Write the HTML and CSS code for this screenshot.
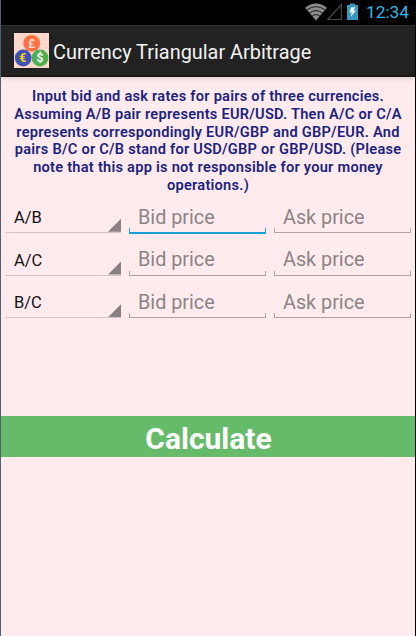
FILE: index.html
```
<!DOCTYPE html>
<html lang="en">
<head>
  <meta charset="UTF-8">
  <meta name="viewport" content="width=device-width, initial-scale=1.0">
  <title>Currency Triangular Arbitrage</title>
  <link rel="stylesheet" href="styles.css">
</head>
<body>
  <div class="screen">
    <div class="status-bar">
      <svg class="wifi" width="22" height="18" viewBox="0 0 22 18">
        <path d="M0 4.8Q11 -3.8 22 4.8L11 17.5Z" fill="#8b8b8b"/>
        <path d="M1.5 7.2Q11 0 20.5 7.2M4.3 10.2Q11 5 17.7 10.2M7 13.2Q11 10 15 13.2" fill="none" stroke="#000" stroke-width="0.8"/>
      </svg>
      <svg class="signal" width="15" height="18" viewBox="0 0 15 18">
        <path d="M0.8 16.5H14.3V1.5Z" fill="none" stroke="#4a4a4a" stroke-width="1.2"/>
      </svg>
      <svg class="battery" width="11" height="18" viewBox="0 0 11 18">
        <path d="M0 2H3V0.5H8V2H11V17H0Z" fill="#3998be"/>
        <path d="M4 4.5L8 4L6.8 7.5H9L3.5 14L4.8 9.5H2.5Z" fill="#e6f3f8"/>
      </svg>
      <span class="clock">12:34</span>
    </div>

    <div class="action-bar">
      <svg class="logo" width="35" height="35" viewBox="0 0 35 35">
        <rect width="35" height="35" fill="#ffd8cc"/>
        <circle cx="17.7" cy="10.3" r="8.4" fill="#ff7043"/>
        <circle cx="9.2" cy="25" r="8.4" fill="#3f51b5"/>
        <circle cx="26" cy="25" r="8.4" fill="#4caf50"/>
        <text class="coin" x="17.5" y="14.7" fill="#ffd8cc">£</text>
        <text class="coin" x="8.7" y="29.4" fill="#ffd600">€</text>
        <text class="coin" x="26" y="29.4" fill="#fff">$</text>
      </svg>
      <h1>Currency Triangular Arbitrage</h1>
    </div>

    <p class="info">
      Input bid and ask rates for pairs of three currencies.<br>
      Assuming A/B pair represents EUR/USD. Then A/C or C/A<br>
      represents correspondingly EUR/GBP and GBP/EUR. And<br>
      pairs B/C or C/B stand for USD/GBP or GBP/USD. (Please<br>
      note that this app is not responsible for your money<br>
      operations.)
    </p>

    <form class="rates">
      <div class="spinner">A/B</div>
      <div class="field active"><input type="text" placeholder="Bid price"></div>
      <div class="field"><input type="text" placeholder="Ask price"></div>

      <div class="spinner">A/C</div>
      <div class="field"><input type="text" placeholder="Bid price"></div>
      <div class="field"><input type="text" placeholder="Ask price"></div>

      <div class="spinner">B/C</div>
      <div class="field"><input type="text" placeholder="Bid price"></div>
      <div class="field"><input type="text" placeholder="Ask price"></div>
    </form>

    <button type="button" class="calculate">Calculate</button>
  </div>
</body>
</html>
```
FILE: styles.css
```
* {
  box-sizing: border-box;
}
body {
  margin: 0;
  font-family: Roboto, sans-serif;
}
.screen {
  height: 636px;
  border-left: 1px solid #4f5f74;
  border-right: 1px solid #000;
  background: #ffebee;
  overflow: hidden;
}
.status-bar {
  display: flex;
  justify-content: flex-end;
  height: 25px;
  padding: 3px 6px 0 0;
  background: #000;
}
.signal {
  margin-right: 5px;
}
.clock {
  width: 43px;
  margin-left: 8px;
  font-size: 17.3px;
  line-height: 18px;
  color: #33b5e5;
  white-space: nowrap;
}
.action-bar {
  display: flex;
  align-items: center;
  height: 52px;
  padding-left: 13px;
  background: #222;
  border-top: 1px solid #303030;
  border-bottom: 2px solid #181818;
  box-shadow: 0 1px 5px rgba(0, 0, 0, 0.18);
}
.coin {
  font-size: 12px;
  font-weight: bold;
  text-anchor: middle;
}
h1 {
  margin: 3px 0 0 4px;
  font-size: 19.9px;
  font-weight: normal;
  color: #f3f3f3;
  white-space: nowrap;
}
.info {
  margin: 11px 0 0;
  font-size: 14.6px;
  font-weight: 600;
  letter-spacing: 0.25px;
  line-height: 17.8px;
  text-align: center;
  color: #1a237e;
  white-space: nowrap;
}
.rates {
  display: grid;
  grid-template-columns: 116px 137px 137px;
  grid-auto-rows: 34.7px;
  gap: 8px;
  margin: 3.4px 0 0 4px;
}
.spinner {
  display: flex;
  justify-content: space-between;
  align-items: flex-end;
  padding-left: 9px;
  border-bottom: 1px solid #d2c5c8;
  font-size: 16.5px;
  line-height: 28px;
  color: #111;
}
.spinner::after {
  content: "";
  width: 13px;
  height: 13px;
  background: #8a8083;
  clip-path: polygon(100% 0, 100% 100%, 0 100%);
}
.field {
  /* short upright ticks at both ends of the underline */
  background:
    linear-gradient(#b0a3a6, #b0a3a6) left bottom / 1px 4px no-repeat,
    linear-gradient(#b0a3a6, #b0a3a6) right bottom / 1px 4px no-repeat;
  border-bottom: 1px solid #b0a3a6;
}
.field.active {
  background:
    linear-gradient(#169fd8, #169fd8) left bottom / 1px 4px no-repeat,
    linear-gradient(#169fd8, #169fd8) right bottom / 1px 4px no-repeat;
  border-bottom: 2px solid #169fd8;
  margin-bottom: -1px;
}
.field input {
  display: block;
  width: 100%;
  height: 35px;
  padding: 3px 0 0 9px;
  border: 0;
  outline: 0;
  background: none;
  font-family: inherit;
  font-size: 19.8px;
}
.field input::placeholder {
  color: #8a8485;
}
.calculate {
  display: block;
  width: 100%;
  height: 41px;
  margin-top: 98px;
  padding: 3px 0 0 1px;
  border: 0;
  background: #66bb6a;
  font-family: inherit;
  font-size: 30px;
  font-weight: bold;
  color: #fff;
}
```
